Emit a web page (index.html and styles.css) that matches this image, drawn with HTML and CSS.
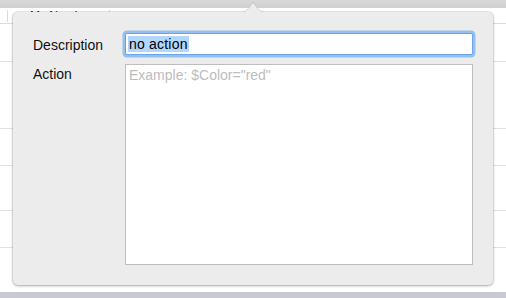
FILE: index.html
```html
<!DOCTYPE html>
<html>
<head>
<meta charset="utf-8">
<link rel="stylesheet" href="styles.css">
</head>
<body>
<div class="window">
  <div class="toolbar"></div>
  <div class="table">
    <div class="header">
      <div class="hcell first"></div>
      <div class="hcell name">My Number</div>
      <div class="hcell rest"></div>
    </div>
    <div class="row r1"></div>
    <div class="row r2"></div>
    <div class="row r3"></div>
    <div class="row r4"></div>
    <div class="row r5"></div>
    <div class="row r6"></div>
  </div>
  <div class="statusbar"></div>

  <svg class="arrow" width="36" height="14" viewBox="0 0 36 14">
    <path d="M0 13 C 9 13 11 10 14.5 5.5 L 17 2 L 19.5 5.5 C 23 10 25 13 34 13 Z" fill="#ececec" stroke="rgba(0,0,0,0.12)" stroke-width="1"/>
    <rect x="0" y="12" width="36" height="2" fill="#ececec"/>
  </svg>
  <div class="popover">
    <label class="label desc">Description</label>
    <div class="input"><span class="sel">no action</span></div>
    <label class="label action">Action</label>
    <div class="textarea"><span class="placeholder">Example: $Color="red"</span></div>
  </div>
</div>
</body>
</html>
```

FILE: styles.css
```css
html, body {
  margin: 0;
  padding: 0;
  background: #ffffff;
}
body {
  font-family: "Liberation Sans", Arial, sans-serif;
  font-size: 14px;
  color: #000;
}
.window {
  position: relative;
  width: 506px;
  height: 298px;
  overflow: hidden;
  display: flex;
  flex-direction: column;
}
.toolbar {
  height: 8px;
  background: linear-gradient(#d8d8d8, #d0d0d0);
  flex: none;
}
.table {
  flex: 1;
  display: flex;
  flex-direction: column;
  background: #fff;
}
.header {
  height: 15px;
  display: flex;
  border-bottom: 1px solid #dcdcdc;
  flex: none;
}
.hcell {
  height: 12px;
  margin-top: 2px;
}
.hcell.first {
  width: 7px;
  border-right: 1px solid #dadada;
}
.hcell.name {
  width: 102px;
  border-right: 1px solid #dadada;
  padding-left: 22px;
  box-sizing: border-box;
  font-size: 12px;
  line-height: 12px;
  color: #222;
}
.hcell.rest { flex: 1; }
.row {
  border-bottom: 1px solid #e2e2e2;
  flex: none;
  box-sizing: border-box;
}
.r1 { height: 38px; }
.r2 { height: 67px; }
.r3 { height: 37px; }
.r4 { height: 45px; }
.r5 { height: 37px; }
.r6 { flex: 1; border-bottom: none; }
.statusbar {
  height: 6px;
  background: #c9c9d1;
  flex: none;
}

.arrow {
  position: absolute;
  left: 236px;
  top: 0;
  z-index: 3;
}
.popover {
  position: absolute;
  left: 13px;
  top: 12px;
  width: 480px;
  height: 273px;
  box-sizing: border-box;
  padding: 21px 20px 20px 20px;
  background: #ececec;
  border-radius: 5px;
  box-shadow: 0 0 0 1px rgba(0,0,0,0.08), 0 1px 3px rgba(0,0,0,0.28);
  display: grid;
  grid-template-columns: 92px 1fr;
  grid-template-rows: 22px 1fr;
  row-gap: 9px;
  z-index: 2;
}
.label {
  color: #111;
  font-size: 14px;
}
.label.desc {
  line-height: 22px;
  padding-top: 1px;
}
.label.action {
  line-height: 16px;
  padding-top: 2px;
}
.input {
  box-sizing: border-box;
  height: 22px;
  background: #fff;
  border: 1px solid #6aa5e9;
  border-radius: 2px;
  box-shadow: 0 0 0 2.5px #94c0f1;
  padding: 2px 0 0 2px;
  line-height: 17px;
  white-space: nowrap;
  overflow: visible;
}
.sel {
  background: #b3d6fd;
  padding: 0 1px;
  letter-spacing: 0.2px;
  color: #000;
}
.textarea {
  box-sizing: border-box;
  background: #fff;
  border: 1px solid #bdbdbd;
  padding: 2px 3px;
  line-height: 16px;
}
.placeholder {
  color: #bdbdbd;
}
```
